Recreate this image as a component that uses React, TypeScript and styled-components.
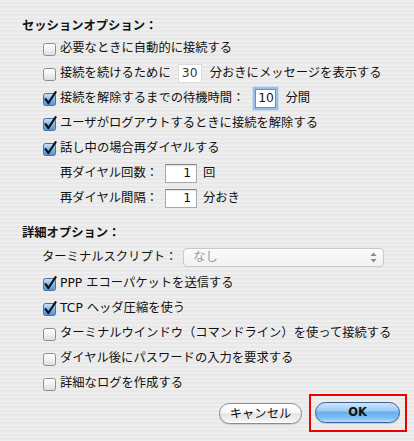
import React from "react";
import styled, { createGlobalStyle, css } from "styled-components";

const Global = createGlobalStyle`
  html, body { margin: 0; padding: 0; background: #ececec; }
  * { box-sizing: border-box; }
`;

const FONT = `"DejaVu Sans", "Noto Sans CJK JP", sans-serif`;

const Page = styled.div`
  width: 414px;
  height: 441px;
  padding: 14px 0 0 22px;
  font-family: ${FONT};
  font-size: 12.3px;
  color: #111;
  background: repeating-linear-gradient(
    to bottom,
    #eeeeee 0px,
    #eeeeee 2px,
    #e8e8e8 2px,
    #e8e8e8 4px
  );
  overflow: hidden;
`;

const Heading = styled.div<{ $top?: number }>`
  height: 22px;
  display: flex;
  align-items: center;
  font-weight: 700;
  font-size: 12.3px;
  margin-top: ${(p) => p.$top ?? 0}px;
  font-family: "Noto Sans CJK JP", sans-serif;
`;

const List = styled.div`
  display: flex;
  flex-direction: column;
  padding-left: 21px;
`;

const Row = styled.div<{ $indent?: number; $h?: number }>`
  height: ${(p) => p.$h ?? 25}px;
  display: flex;
  align-items: center;
  line-height: 1;
  white-space: nowrap;
  padding-left: ${(p) => p.$indent ?? 0}px;
`;

const Label = styled.span<{ $gapAfter?: number }>`
  margin-left: 3px;
  margin-right: ${(p) => p.$gapAfter ?? 0}px;
`;

const PlainLabel = styled.span<{ $gapAfter?: number }>`
  margin-right: ${(p) => p.$gapAfter ?? 0}px;
`;

const Field = styled.div<{ $w: number; $align?: string; $focused?: boolean; $faint?: boolean }>`
  width: ${(p) => p.$w}px;
  height: 19px;
  background: #fff;
  border: 1px solid #a9a9a9;
  border-top-color: #858585;
  box-shadow: inset 0 1px 1px rgba(0, 0, 0, 0.12);
  display: flex;
  align-items: center;
  justify-content: ${(p) => (p.$align === "right" ? "flex-end" : "center")};
  padding: 0 5px;
  font-size: 12.3px;
  ${(p) =>
    p.$faint &&
    css`
      border-color: #dcdcdc;
      box-shadow: none;
      color: #333;
    `}
  ${(p) =>
    p.$focused &&
    css`
      border-color: #6e8fb6;
      box-shadow: 0 0 0 2px #9dbde3, 0 0 0 3px #c9dcf2;
    `}
`;

const Popup = styled.div`
  width: 201px;
  height: 19px;
  border: 1px solid #c9c9c9;
  border-radius: 4px;
  background: linear-gradient(#fbfbfb, #f2f2f2);
  display: flex;
  align-items: center;
  color: #9a9a9a;
  font-size: 12.3px;
  padding-left: 9px;
`;

const PopupText = styled.span`
  flex: 1;
`;

const PopupArrows = styled.span`
  width: 20px;
  height: 100%;
  display: flex;
  align-items: center;
  justify-content: center;
`;

const ButtonRow = styled.div`
  display: flex;
  justify-content: flex-end;
  align-items: center;
  padding-right: 7px;
  margin-top: -2px;
  gap: 7px;
`;

const Pill = styled.button<{ $primary?: boolean; $w: number }>`
  width: ${(p) => p.$w}px;
  height: 21px;
  border-radius: 11px;
  font-family: "Noto Sans CJK JP", sans-serif;
  font-size: 12.3px;
  line-height: 1;
  color: #111;
  padding: 0;
  display: flex;
  align-items: center;
  justify-content: center;
  border: 1px solid #8d8d8d;
  background: linear-gradient(#ffffff 0%, #f6f6f6 45%, #e4e4e4 52%, #f0f0f0 85%, #ffffff 100%);
  box-shadow: 0 1px 1px rgba(0, 0, 0, 0.15);
  ${(p) =>
    p.$primary &&
    css`
      font-weight: 700;
      font-family: "DejaVu Sans", sans-serif;
      font-size: 11.5px;
      border-color: #3b5f95;
      background: linear-gradient(
        #cfe6fb 0%,
        #9ccbf3 40%,
        #6aaeec 50%,
        #7ec0f6 80%,
        #b8e2ff 100%
      );
    `}
`;

const Highlight = styled.div`
  border: 2px solid #ee0000;
  padding: 6px 5px 7px 4px;
`;

function Checkbox({ checked }: { checked?: boolean }) {
  return (
    <svg width="14" height="15" viewBox="0 0 14 15" style={{ flexShrink: 0 }}>
      <defs>
        <linearGradient id="cbOff" x1="0" y1="0" x2="0" y2="1">
          <stop offset="0" stopColor="#ffffff" />
          <stop offset="0.5" stopColor="#f1f1f1" />
          <stop offset="1" stopColor="#dcdcdc" />
        </linearGradient>
        <linearGradient id="cbOn" x1="0" y1="0" x2="0" y2="1">
          <stop offset="0" stopColor="#cde5fa" />
          <stop offset="0.5" stopColor="#7fb6ea" />
          <stop offset="1" stopColor="#4d93dc" />
        </linearGradient>
      </defs>
      <rect
        x="0.5"
        y="2.5"
        width="12"
        height="12"
        rx="2"
        fill={checked ? "url(#cbOn)" : "url(#cbOff)"}
        stroke={checked ? "#4f6f96" : "#8e8e8e"}
      />
      {checked && (
        <path
          d="M2.6 8.2 L5.4 12 L12.6 1.2"
          fill="none"
          stroke="#111"
          strokeWidth="2.2"
          strokeLinecap="round"
          strokeLinejoin="round"
        />
      )}
    </svg>
  );
}

function Arrows() {
  return (
    <svg width="7" height="11" viewBox="0 0 7 11">
      <path d="M3.5 0.5 L6.5 4 L0.5 4 Z" fill="#8a8a8a" />
      <path d="M3.5 10.5 L6.5 7 L0.5 7 Z" fill="#8a8a8a" />
    </svg>
  );
}

export default function App() {
  return (
    <>
      <Global />
      <Page>
        <Heading>セッションオプション：</Heading>
        <List>
          <Row>
            <Checkbox />
            <Label>必要なときに自動的に接続する</Label>
          </Row>
          <Row>
            <Checkbox />
            <Label $gapAfter={7}>接続を続けるために</Label>
            <Field $w={24} $faint>30</Field>
            <PlainLabel style={{ marginLeft: 8 }}>分おきにメッセージを表示する</PlainLabel>
          </Row>
          <Row>
            <Checkbox checked />
            <Label $gapAfter={11}>接続を解除するまでの待機時間：</Label>
            <Field $w={21} $focused>10</Field>
            <PlainLabel style={{ marginLeft: 9 }}>分間</PlainLabel>
          </Row>
          <Row>
            <Checkbox checked />
            <Label>ユーザがログアウトするときに接続を解除する</Label>
          </Row>
          <Row>
            <Checkbox checked />
            <Label>話し中の場合再ダイヤルする</Label>
          </Row>
          <Row $indent={17}>
            <PlainLabel $gapAfter={7}>再ダイヤル回数：</PlainLabel>
            <Field $w={32} $align="right">1</Field>
            <PlainLabel style={{ marginLeft: 6 }}>回</PlainLabel>
          </Row>
          <Row $indent={17}>
            <PlainLabel $gapAfter={7}>再ダイヤル間隔：</PlainLabel>
            <Field $w={32} $align="right">1</Field>
            <PlainLabel style={{ marginLeft: 6 }}>分おき</PlainLabel>
          </Row>
        </List>
        <Heading $top={10}>詳細オプション：</Heading>
        <List>
          <Row $h={28} style={{ marginLeft: -1 }}>
            <PlainLabel $gapAfter={6}>ターミナルスクリプト：</PlainLabel>
            <Popup>
              <PopupText>なし</PopupText>
              <PopupArrows>
                <Arrows />
              </PopupArrows>
            </Popup>
          </Row>
          <Row>
            <Checkbox checked />
            <Label>PPP エコーパケットを送信する</Label>
          </Row>
          <Row>
            <Checkbox checked />
            <Label>TCP ヘッダ圧縮を使う</Label>
          </Row>
          <Row>
            <Checkbox />
            <Label>ターミナルウインドウ（コマンドライン）を使って接続する</Label>
          </Row>
          <Row>
            <Checkbox />
            <Label>ダイヤル後にパスワードの入力を要求する</Label>
          </Row>
          <Row>
            <Checkbox />
            <Label>詳細なログを作成する</Label>
          </Row>
        </List>
        <ButtonRow>
          <Pill $w={83}>キャンセル</Pill>
          <Highlight>
            <Pill $primary $w={85}>OK</Pill>
          </Highlight>
        </ButtonRow>
      </Page>
    </>
  );
}
